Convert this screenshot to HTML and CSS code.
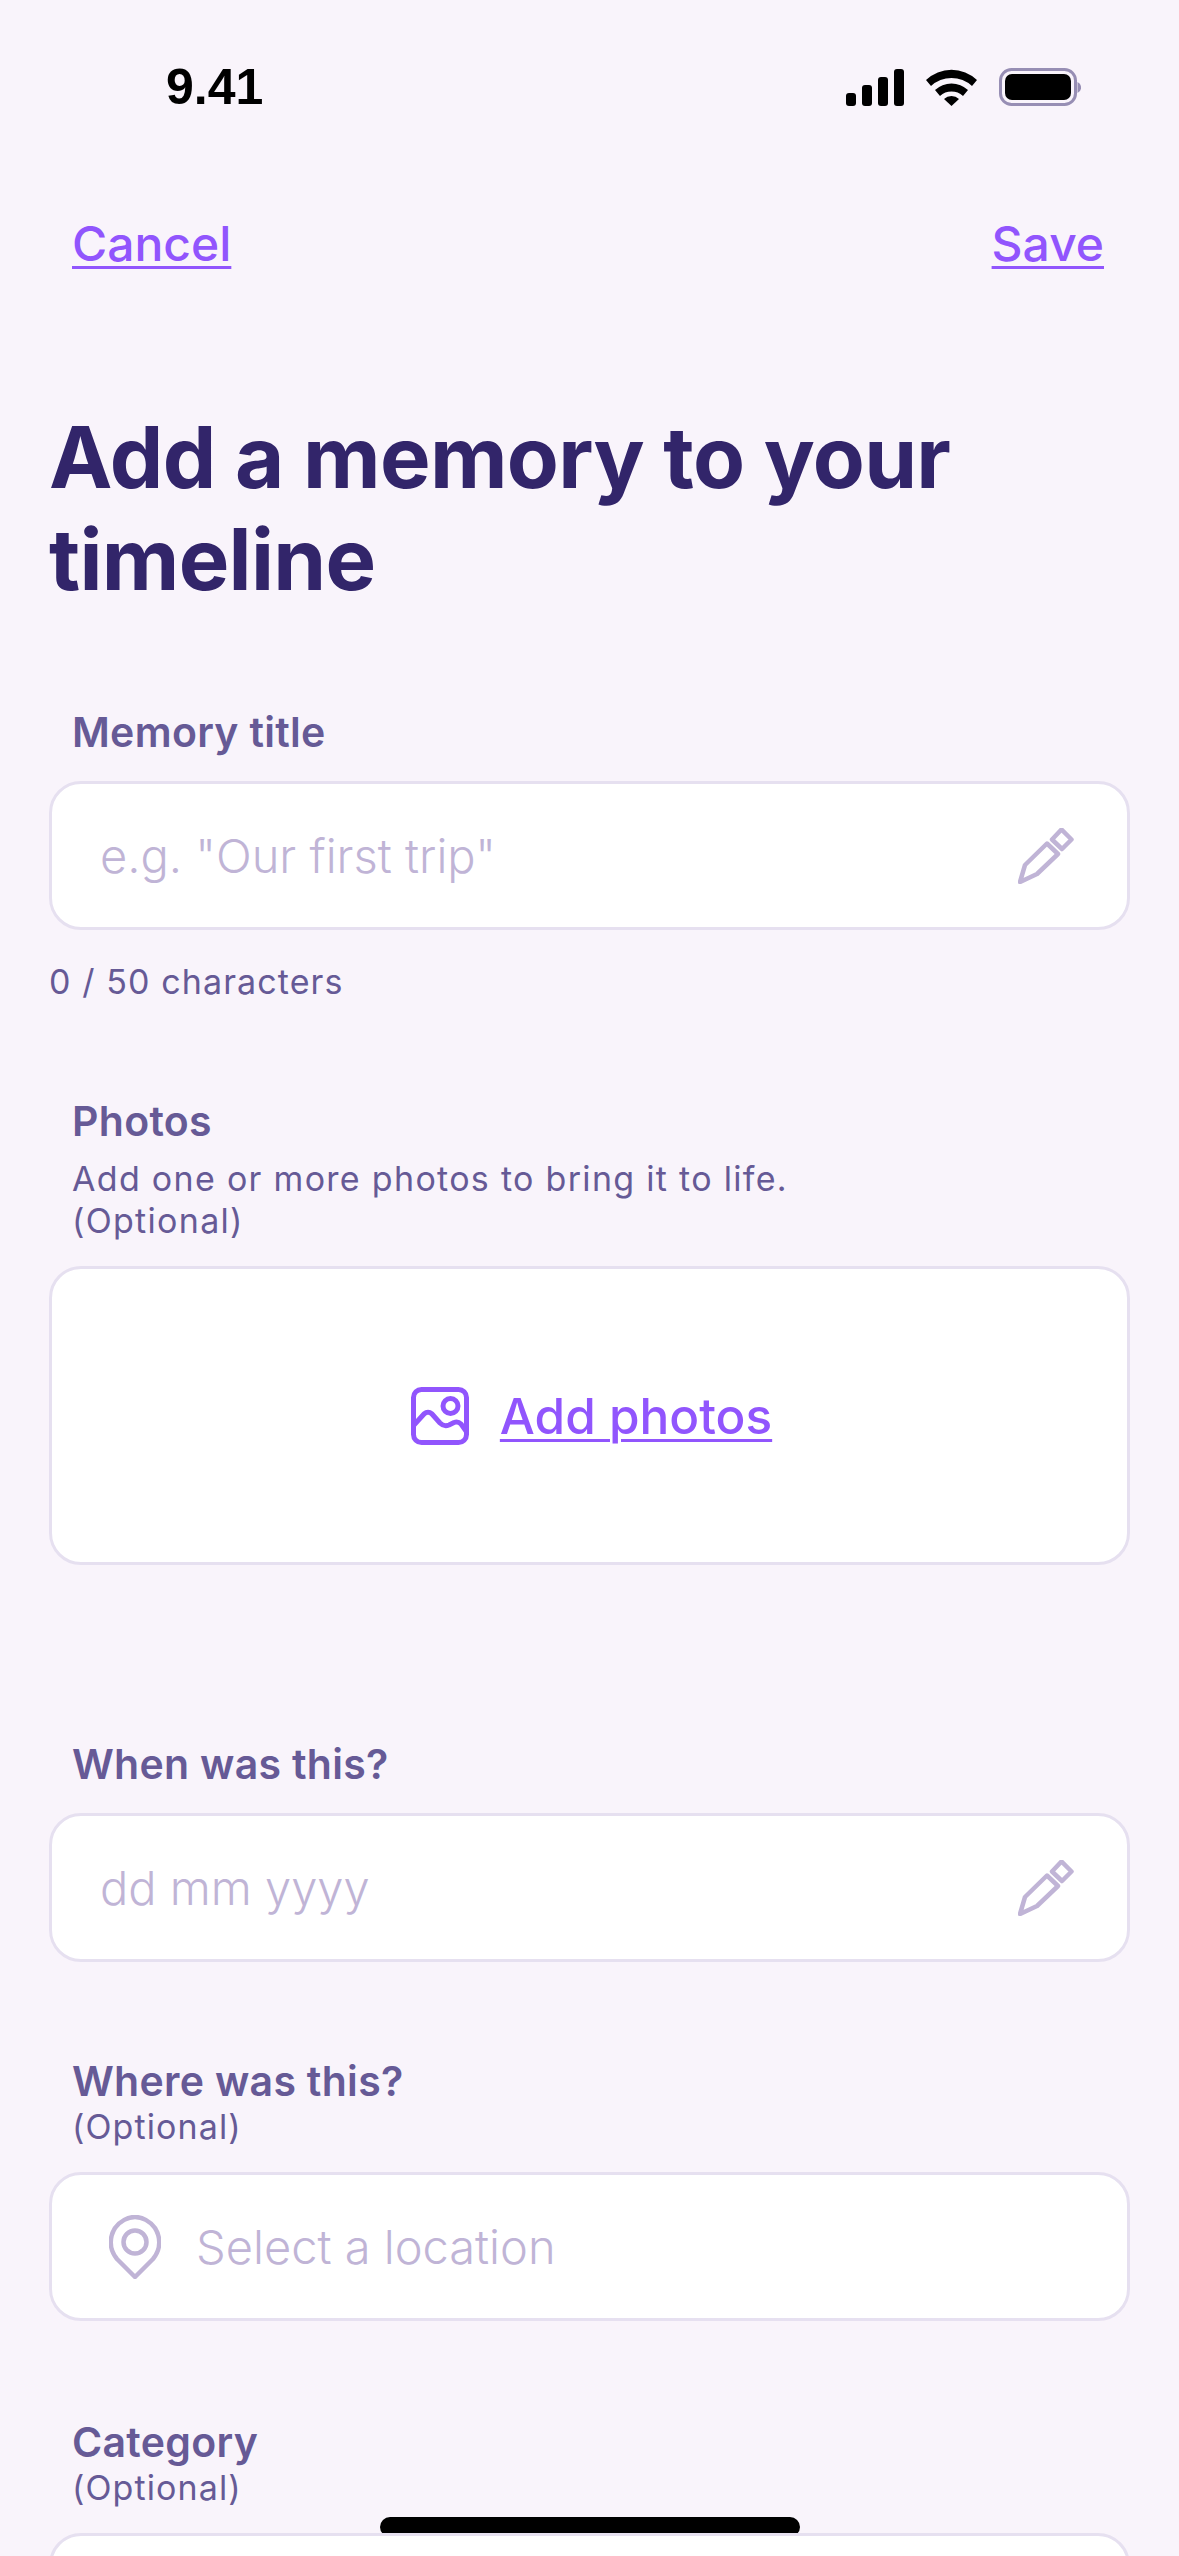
FILE: index.html
```html
<!DOCTYPE html>
<html lang="en">
<head>
  <meta charset="UTF-8">
  <title>Add a memory</title>
  <link rel="stylesheet" href="styles.css">
</head>
<body>
  <div class="screen">
    <div class="status-bar">
      <span class="time">9.41</span>
      <div class="status-icons">
        <svg class="signal" width="58" height="37" viewBox="0 0 58 37">
          <rect x="0" y="24" width="10" height="13" rx="3"/>
          <rect x="16" y="16" width="10" height="21" rx="3"/>
          <rect x="32" y="8" width="10" height="29" rx="3"/>
          <rect x="48" y="0" width="10" height="37" rx="3"/>
        </svg>
        <svg class="wifi" width="51" height="37" viewBox="0 0 51 37">
          <path d="M0 11 A37 37 0 0 1 51 11 L46 17 A30 30 0 0 0 5 17 Z"/>
          <path d="M9 21 A24 24 0 0 1 42 21 L37 27 A17 17 0 0 0 14 27 Z"/>
          <path d="M18 30 A11 11 0 0 1 33 30 L25.500 37 Z"/>
        </svg>
        <svg class="battery" width="82" height="38" viewBox="0 0 82 38">
          <rect x="1.500" y="1.500" width="75" height="35" rx="11" fill="none" stroke="#978eb4" stroke-width="3"/>
          <rect x="6" y="6" width="66" height="26" rx="7"/>
          <path d="M78.500 14 A6 6 0 0 1 78.500 25 Z" fill="#978eb4"/>
        </svg>
      </div>
    </div>

    <div class="top-actions">
      <a class="link">Cancel</a>
      <a class="link">Save</a>
    </div>

    <h1 class="page-title">Add a memory to your timeline</h1>

    <div class="field field-title">
      <div class="label">Memory title</div>
      <div class="input-box">
        <span class="placeholder">e.g. "Our first trip"</span>
        <svg class="pencil" width="56" height="56" viewBox="0 0 56 56">
          <path d="M2 54 L7 37 L29 15.500 L40 26 L19 46 Z"/>
          <path d="M43.500 1.500 L53.500 11.500 L44 21 L34 11.500 Z"/>
        </svg>
      </div>
      <div class="hint char-count">0 / 50 characters</div>
    </div>

    <div class="field field-photos">
      <div class="label">Photos</div>
      <div class="hint">Add one or more photos to bring it to life.<br>(Optional)</div>
      <div class="upload-box">
        <svg class="image-icon" width="58" height="58" viewBox="0 0 58 58">
          <rect x="2.500" y="2.500" width="53" height="53" rx="8"/>
          <circle cx="39.500" cy="19" r="7.500"/>
          <path d="M3 38 L13 27 Q17 23.500 21 27 L29 36 Q33 40 38 38 L43 35.500 Q47 34 50 37 L55 44"/>
        </svg>
        <a class="link link-large">Add photos</a>
      </div>
    </div>

    <div class="field field-when">
      <div class="label">When was this?</div>
      <div class="input-box">
        <span class="placeholder">dd mm yyyy</span>
        <svg class="pencil" width="56" height="56" viewBox="0 0 56 56">
          <path d="M2 54 L7 37 L29 15.500 L40 26 L19 46 Z"/>
          <path d="M43.500 1.500 L53.500 11.500 L44 21 L34 11.500 Z"/>
        </svg>
      </div>
    </div>

    <div class="field field-where">
      <div class="label">Where was this?</div>
      <div class="hint hint-tight">(Optional)</div>
      <div class="input-box input-location">
        <svg class="pin" width="52" height="64" viewBox="0 0 52 64">
          <path d="M26 62 L8 44 C-1 33 1 21 6 13 C11 6 19 2 26 2 C33 2 41 6 46 13 C51 21 53 33 44 44 Z"/>
          <circle cx="26" cy="27" r="11.500"/>
        </svg>
        <span class="placeholder">Select a location</span>
      </div>
    </div>

    <div class="field field-category">
      <div class="label">Category</div>
      <div class="hint hint-tight">(Optional)</div>
      <div class="input-box input-last"></div>
    </div>

    <div class="home-bar"></div>
  </div>
</body>
</html>
```

FILE: styles.css
```css
html, body {
  margin: 0;
  padding: 0;
}
body {
  font-family: Inter, sans-serif;
  background-color: #f9f4fb;
}
.screen {
  position: relative;
  width: 1179px;
  height: 2556px;
  overflow: hidden;
  box-sizing: border-box;
  padding: 0 49px;
}
.status-bar {
  display: flex;
  justify-content: space-between;
  align-items: center;
  height: 38px;
  padding: 68px 49px 0 117px;
}
.time {
  font-family: "Liberation Sans", sans-serif;
  font-size: 50px;
  font-weight: 700;
  color: #000;
}
.status-icons {
  display: flex;
  align-items: center;
  gap: 22px;
}
.signal, .wifi {
  fill: #000;
}
.top-actions {
  display: flex;
  justify-content: space-between;
  padding: 108px 26px 0 23px;
}
.link {
  color: #9155fd;
  font-size: 48px;
  font-weight: 500;
  line-height: 60px;
  text-decoration: underline;
  text-decoration-thickness: 3px;
  text-underline-offset: 5px;
}
.page-title {
  margin: 133px 0 0;
  font-size: 85px;
  font-weight: 700;
  line-height: 102px;
  letter-spacing: -0.7px;
  color: #32256a;
}
.field {
  display: flex;
  flex-direction: column;
}
.field-title { margin-top: 97px; }
.field-photos { margin-top: 94px; }
.field-when { margin-top: 175px; }
.field-where { margin-top: 95px; }
.field-category { margin-top: 97px; }
.label {
  padding-left: 23px;
  font-size: 41px;
  font-weight: 600;
  line-height: 48px;
  letter-spacing: 0.3px;
  color: #665a96;
  margin-bottom: 25px;
}
.hint {
  font-size: 34px;
  line-height: 42px;
  letter-spacing: 1.1px;
  color: #665a96;
}
.char-count {
  margin-top: 31px;
}
.field-photos .label, .field-where .label, .field-category .label {
  margin-bottom: 0;
}
.field-photos .hint, .hint-tight {
  padding-left: 23px;
}
.field-photos .hint {
  margin: 13px 0 24px;
  letter-spacing: 1.300px;
}
.hint-tight {
  margin-top: 1px;
  margin-bottom: 24px;
}
.input-box {
  display: flex;
  align-items: center;
  justify-content: space-between;
  box-sizing: border-box;
  height: 149px;
  padding: 0 53px 0 48px;
  background: #fff;
  border: 3px solid #e6e0f0;
  border-radius: 32px;
}
.input-location {
  justify-content: flex-start;
  gap: 35px;
  padding-left: 57px;
}
.input-last {
  position: relative;
  z-index: 1;
}
.placeholder {
  font-size: 47px;
  font-weight: 300;
  color: #c0b4d6;
}
.pencil, .pin {
  fill: none;
  stroke: #c0b4d6;
  stroke-width: 4.500;
  stroke-linejoin: round;
}
.upload-box {
  display: flex;
  align-items: center;
  justify-content: center;
  gap: 31px;
  box-sizing: border-box;
  height: 299px;
  padding-left: 4px;
  background: #fff;
  border: 3px solid #e6e0f0;
  border-radius: 32px;
}
.image-icon {
  fill: none;
  stroke: #9155fd;
  stroke-width: 5;
  stroke-linecap: round;
  stroke-linejoin: round;
}
.link-large {
  font-size: 49.500px;
}
.home-bar {
  position: absolute;
  left: 380px;
  top: 2517px;
  width: 420px;
  height: 20px;
  background: #000;
  border-radius: 10px;
}
```
